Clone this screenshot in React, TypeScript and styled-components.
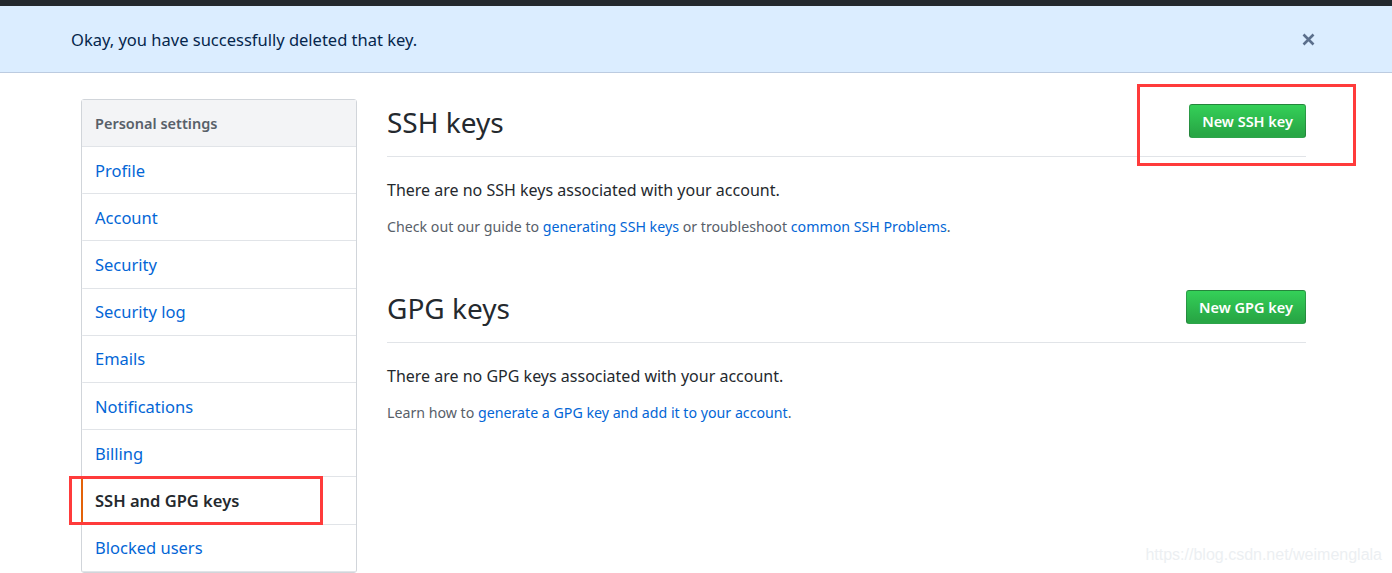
import styled, { createGlobalStyle } from 'styled-components'

const GlobalStyle = createGlobalStyle`
	html, body {
		margin: 0;
		padding: 0;
		background: #fff;
		overflow: hidden;
	}
	body {
		font-family: 'Noto Sans', 'Open Sans', sans-serif;
		color: #24292e;
	}
`

const menuItems = [
	'Profile',
	'Account',
	'Security',
	'Security log',
	'Emails',
	'Notifications',
	'Billing',
	'SSH and GPG keys',
	'Blocked users',
]

const CloseIcon = () => (
	<svg width='13' height='13' viewBox='0 0 13 13'>
		<path d='M1.5 1.5 L11.5 11.5 M11.5 1.5 L1.5 11.5' stroke='#5b6f8c' strokeWidth='2.6' strokeLinecap='butt' />
	</svg>
)

export default function App() {
	return (
		<Page>
			<GlobalStyle />
			<TopBar />
			<Flash>
				<FlashText>Okay, you have successfully deleted that key.</FlashText>
				<CloseButton aria-label='Dismiss'>
					<CloseIcon />
				</CloseButton>
			</Flash>

			<Layout>
				<Sidebar>
					<SidebarHeader>Personal settings</SidebarHeader>
					{menuItems.map((item) => (
						<MenuItem key={item} selected={item === 'SSH and GPG keys'}>
							{item}
							{item === 'SSH and GPG keys' && <MenuMark />}
						</MenuItem>
					))}
				</Sidebar>

				<Main>
					<SectionHeader>
						<Heading>SSH keys</Heading>
						<ButtonWrap>
							<GreenButton>New SSH key</GreenButton>
							<ButtonMark />
						</ButtonWrap>
					</SectionHeader>
					<Blank>There are no SSH keys associated with your account.</Blank>
					<Note>
						Check out our guide to <Link href='#'>generating SSH keys</Link> or troubleshoot{' '}
						<Link href='#'>common SSH Problems</Link>.
					</Note>

					<SectionHeader spaced>
						<Heading>GPG keys</Heading>
						<GreenButton>New GPG key</GreenButton>
					</SectionHeader>
					<Blank>There are no GPG keys associated with your account.</Blank>
					<Note>
						Learn how to <Link href='#'>generate a GPG key and add it to your account</Link>.
					</Note>
				</Main>
			</Layout>

			<Watermark>https://blog.csdn.net/weimenglala</Watermark>
		</Page>
	)
}

const Page = styled.div`
	position: relative;
	width: 1392px;
	height: 573px;
	overflow: hidden;
`

const TopBar = styled.div`
	height: 6px;
	background: #24292e;
`

const Flash = styled.div`
	display: flex;
	align-items: center;
	justify-content: space-between;
	height: 67px;
	padding: 1px 77px 0 71px;
	box-sizing: border-box;
	background: #dbedff;
	border-bottom: 1px solid #bccbe0;
`

const FlashText = styled.span`
	font-size: 16.5px;
	color: #05264c;
`

const CloseButton = styled.button`
	display: flex;
	padding: 0;
	border: 0;
	background: none;
	cursor: pointer;
`

const Layout = styled.div`
	display: flex;
	gap: 30px;
	padding: 26px 0 0 81px;
`

const Sidebar = styled.nav`
	width: 274px;
	flex-shrink: 0;
	align-self: flex-start;
	border: 1px solid #d1d5da;
	border-radius: 3px;
`

const SidebarHeader = styled.div`
	display: flex;
	align-items: center;
	height: 46px;
	padding-left: 13px;
	background: #f3f4f6;
	border-bottom: 1px solid #e1e4e8;
	font-size: 14.5px;
	font-weight: 600;
	color: #586069;
`

const MenuItem = styled.a<{ selected?: boolean }>`
	position: relative;
	display: flex;
	align-items: center;
	height: 46.2px;
	padding-left: 12px;
	border-bottom: 1px solid #e1e4e8;
	border-left: 2px solid ${(p) => (p.selected ? '#e36209' : 'transparent')};
	margin-left: -1px;
	font-size: 16.5px;
	font-weight: ${(p) => (p.selected ? 600 : 400)};
	color: ${(p) => (p.selected ? '#24292e' : '#0366d6')};
	cursor: pointer;
`

const MenuMark = styled.span`
	position: absolute;
	top: -1px;
	left: -14px;
	width: 248px;
	height: 43px;
	border: 3px solid #ff3b3b;
`

const Main = styled.main`
	width: 919px;
	padding-top: 3px;
`

const SectionHeader = styled.div<{ spaced?: boolean }>`
	display: flex;
	align-items: center;
	justify-content: space-between;
	padding-bottom: 16px;
	margin-top: ${(p) => (p.spaced ? '51px' : '0')};
	border-bottom: 1px solid #e1e4e8;
`

const Heading = styled.h2`
	margin: 0;
	font-size: 28px;
	font-weight: 400;
	line-height: 38px;
	color: #24292e;
	transform: translateY(1px);
`

const ButtonWrap = styled.div`
	position: relative;
	display: flex;
`

const ButtonMark = styled.span`
	position: absolute;
	top: -20px;
	left: -52px;
	right: -50px;
	bottom: -28px;
	border: 3px solid #ff3b3b;
	pointer-events: none;
`

const GreenButton = styled.button`
	height: 34px;
	padding: 0 12px;
	border: 1px solid rgba(27, 31, 35, 0.25);
	border-radius: 3px;
	background: linear-gradient(#34d058, #28a745 90%);
	font-family: inherit;
	font-size: 14.5px;
	font-weight: 600;
	color: #fff;
	cursor: pointer;
`

const Blank = styled.p`
	margin: 21px 0 0;
	font-size: 16px;
	line-height: 24px;
	color: #24292e;
`

const Note = styled.p`
	margin: 14px 0 0;
	font-size: 14.2px;
	line-height: 21px;
	color: #586069;
`

const Link = styled.a`
	color: #0366d6;
	text-decoration: none;
`

const Watermark = styled.div`
	position: absolute;
	right: 10px;
	bottom: 9px;
	font-family: 'Liberation Sans', Arial, sans-serif;
	font-size: 16px;
	color: #eceff2;
`
